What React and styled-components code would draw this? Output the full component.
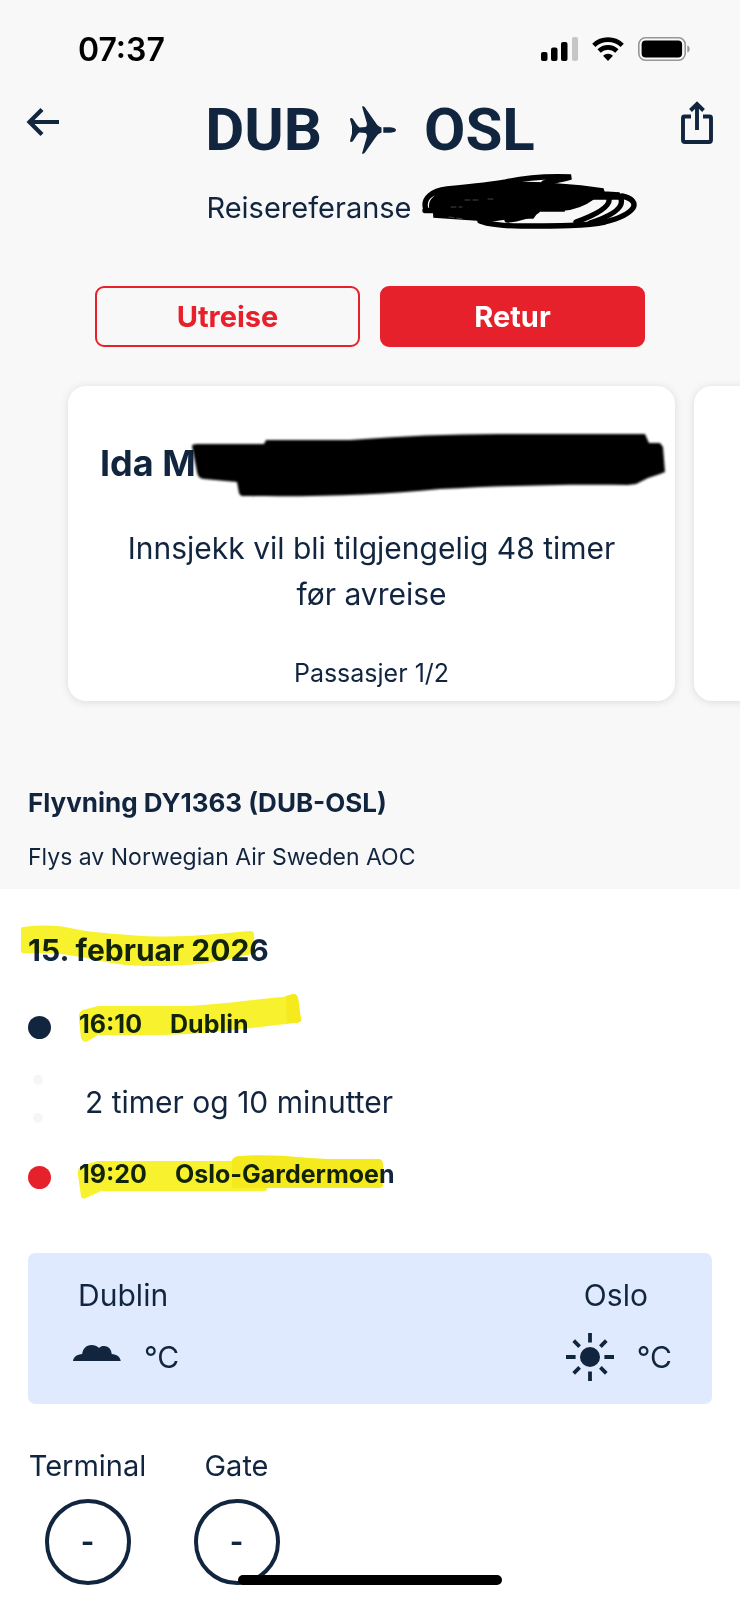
import React from "react";
import styled, { createGlobalStyle } from "styled-components";

const navy = "#12253f";
const red = "#e6212c";

const GlobalStyle = createGlobalStyle`
  *, *::before, *::after { box-sizing: border-box; }
  body {
    margin: 0;
    background: #fff;
    color: ${navy};
    font-family: Inter, "Liberation Sans", sans-serif;
  }
  h1, h2, h3, p, ol, dl, dd { margin: 0; padding: 0; }
`;

const Page = styled.div`
  position: relative;
  min-height: 100vh;
  overflow: hidden;
`;

const Upper = styled.section`
  background: #f8f8f8;
  padding-bottom: 16px;
`;

const StatusBar = styled.div`
  display: flex;
  align-items: center;
  justify-content: space-between;
  height: 98px;
  padding: 0 50px 0 78px;
  color: #000;
`;

const Clock = styled.time`
  font-size: 32px;
  font-weight: 600;
`;

const StatusIcons = styled.div`
  display: flex;
  align-items: center;
  gap: 14px;
  svg { display: block; }
`;

const Header = styled.header`
  display: flex;
  align-items: flex-start;
  justify-content: space-between;
  height: 76px;
  padding: 0 26px;
`;

const IconButton = styled.button`
  display: block;
  margin-top: ${(p) => p.$top};
  padding: 0;
  border: 0;
  background: none;
  color: ${navy};
  svg { display: block; }
`;

const Route = styled.h1`
  display: flex;
  align-items: center;
  gap: 28px;
  font: 700 60px/64px Roboto, Inter, sans-serif;
  svg { display: block; }
`;

const Reference = styled.p`
  display: flex;
  align-items: flex-start;
  justify-content: center;
  gap: 10px;
  height: 112px;
  padding-left: 104px;
  font-size: 29px;
  line-height: 68px;
  svg { display: block; flex: none; }
`;

const Tabs = styled.nav`
  display: grid;
  grid-template-columns: 1fr 1fr;
  gap: 20px;
  padding: 0 95px;
`;

const Tab = styled.button`
  height: 61px;
  border: 2px solid ${red};
  border-radius: 9px;
  background: ${(p) => (p.$active ? red : "transparent")};
  color: ${(p) => (p.$active ? "#fff" : red)};
  font: 700 29px/32px Inter, sans-serif;
`;

const Carousel = styled.div`
  display: flex;
  gap: 19px;
  padding: 39px 0 86px 68px;
  overflow: hidden;
`;

const Card = styled.article`
  position: relative;
  flex: 0 0 calc(100% - 65px);
  height: 315px;
  padding: 54px 32px 0;
  border-radius: 18px;
  background: #fff;
  box-shadow: 0 1px 8px rgba(0, 0, 0, 0.12);
  text-align: center;
`;

const Passenger = styled.h2`
  font-size: 36px;
  font-weight: 700;
  line-height: 46px;
  text-align: left;
`;

const Redaction = styled.svg`
  position: absolute;
  top: 46px;
  right: 8px;
  width: 476px;
  height: 66px;
  overflow: visible;
  filter: blur(1px);
`;

const CheckIn = styled.p`
  margin-top: 39px;
  padding: 0 24px;
  font-size: 30px;
  line-height: 46px;
`;

const Counter = styled.p`
  margin-top: 40px;
  font-size: 25px;
  line-height: 32px;
`;

const FlightName = styled.h2`
  padding: 0 28px;
  font-size: 26px;
  font-weight: 700;
  line-height: 32px;
`;

const Operator = styled.p`
  padding: 0 28px;
  margin-top: 22px;
  font-size: 23px;
  line-height: 32px;
`;

const Details = styled.section`
  padding: 41px 28px 15px;
`;

const Marked = styled.span`
  position: relative;
  display: inline-block;
`;

const Marker = styled.svg`
  position: absolute;
  left: ${(p) => p.$left};
  top: ${(p) => p.$top};
  overflow: visible;
  mix-blend-mode: multiply;
  pointer-events: none;
`;

const TravelDate = styled.h3`
  font-size: 30px;
  font-weight: 700;
  line-height: 40px;
`;

const Stops = styled.ol`
  margin-top: 37px;
  list-style: none;
`;

const Stop = styled.li`
  display: flex;
  align-items: center;
  gap: 28px;
  height: 40px;
  font-size: 25px;
  font-weight: 700;
`;

const Dot = styled.span`
  width: 23px;
  height: 23px;
  border-radius: 50%;
  background: ${(p) => p.$color};
`;

const StopText = styled(Marked)`
  display: flex;
  gap: 28px;
  padding-bottom: 6px;
`;

const Leg = styled.li`
  display: flex;
  align-items: center;
  gap: 42px;
  height: 110px;
  padding-left: 5px;
  font-size: 30px;
`;

const LegDots = styled.span`
  display: grid;
  gap: 28px;
  padding-bottom: 6px;
  span {
    width: 10px;
    height: 10px;
    border-radius: 50%;
    background: #f6f6f6;
  }
`;

const Weather = styled.section`
  display: flex;
  justify-content: space-between;
  height: 151px;
  margin-top: 56px;
  padding: 22px 40px 0 45px;
  border-radius: 7px;
  background: #dfeafe;
  font-size: 30px;
`;

const City = styled.div`
  display: flex;
  flex-direction: column;
  align-items: center;
  gap: 17px;
  line-height: 40px;
`;

const CityName = styled.span`
  padding-right: 6px;
`;

const Reading = styled.div`
  display: flex;
  align-items: center;
  gap: 23px;
  height: 50px;
  svg { display: block; }
`;

const Gates = styled.dl`
  display: flex;
  gap: 30px;
  margin-top: 42px;
`;

const GateItem = styled.div`
  display: flex;
  flex-direction: column;
  align-items: center;
  min-width: 119px;
  font-size: 29px;
  line-height: 40px;
`;

const Ring = styled.dd`
  display: grid;
  place-items: center;
  width: 86px;
  height: 86px;
  margin-top: 13px;
  border: 4px solid ${navy};
  border-radius: 50%;
  font-weight: 700;
`;

const HomeBar = styled.div`
  position: absolute;
  bottom: 15px;
  left: 50%;
  width: 264px;
  height: 10px;
  margin-left: -132px;
  border-radius: 5px;
  background: #000;
`;

const Signal = () => (
  <svg width="37" height="24" viewBox="0 0 37 24" aria-hidden="true">
    <rect x="0" y="15" width="6.500" height="9" rx="2" />
    <rect x="10" y="10.500" width="6.500" height="13.500" rx="2" />
    <rect x="20" y="5" width="6.500" height="19" rx="2" />
    <rect x="31" y="0" width="6" height="24" rx="2" fill="#c6c6c6" />
  </svg>
);

const Wifi = () => (
  <svg width="32" height="24" viewBox="0 0 32 24" fill="none" stroke="#000" strokeWidth="4.6" aria-hidden="true">
    <path d="M1.8 8.4a20.4 20.4 0 0 1 28.4 0" />
    <path d="M7.1 14a12.7 12.7 0 0 1 17.8 0" />
    <path d="M11 18.7a7.2 7.2 0 0 1 10 0L16 24z" fill="#000" stroke="none" />
  </svg>
);

const Battery = () => (
  <svg width="52" height="24" viewBox="0 0 52 24" aria-hidden="true">
    <rect x="0.8" y="0.8" width="46.4" height="22.4" rx="6.6" fill="none" stroke="#979797" strokeWidth="1.6" />
    <rect x="3.6" y="3.5" width="40.5" height="17" rx="4" />
    <path d="M49.3 8.6c3.2 1 3.2 6 0 7z" fill="#979797" />
  </svg>
);

const Plane = () => (
  <svg width="46" height="48" viewBox="0 0 46 48" fill="currentColor" role="img" aria-label="til">
    <path d="M12 .5Q13.500-.5 14.800 1.200L25.500 16.500Q28.200 20.800 31 21.300L31.500 21.500V26.500L31 26.700Q28 27.400 25.500 31.500L14.800 46.800Q13.500 48.500 12 47.500L16.800 31Q17.300 28.200 15.500 27L9.500 26.600Q8 27.400 6.800 29.200L3 35Q1.800 36.300.5 35.700Q-.2 35.300.2 34L2 27.500V20.500L.2 14Q-.2 12.700.5 12.300Q1.800 11.700 3 13L6.800 18.800Q8 20.600 9.500 21.400L15.500 21Q17.300 19.800 16.800 17Z" />
    <path d="M33.300 21.200H39C43 21.200 46 22.300 46 24S43 26.800 39 26.800H33.300Z" />
  </svg>
);

const Cloud = () => (
  <svg width="48" height="25" viewBox="0 0 48 25" fill="currentColor" aria-hidden="true">
    <path d="M0 16C.6 12 4.200 9.300 9.200 9C9.700 4 13 0 18.500 0C21.500 0 24.300 1 26 3C27.500 1.600 29 1 31 1C36 1 38.500 5 38.700 9C43.800 9.300 47.200 12 47.700 16Z" />
  </svg>
);

const Sun = () => (
  <svg width="48" height="48" viewBox="0 0 48 48" stroke="currentColor" strokeWidth="3.800" strokeLinejoin="round" aria-hidden="true">
    <circle cx="24" cy="24" r="10" fill="currentColor" stroke="none" />
    <path d="M24 0V9.600M24 38.400V48M0 24H9.600M38.400 24H48M7.700 7.700L13.600 13.600M34.400 34.400L40.300 40.300M7.700 40.300L13.600 34.400M34.400 13.600L40.300 7.700" />
  </svg>
);

const Scribble = () => (
  <svg width="216" height="56" viewBox="421 173 216 56" fill="none" stroke="#000" strokeWidth="5.400" strokeLinecap="round" aria-hidden="true">
    <path d="M424 209.500H436M424.500 207C422 197 431 190 446 188C468 186 490 184 505 181C522 177 542 175 570 176C562 178.500 552 180 543 182" />
    <path d="M431 207C429 199 436 195 446 192M621 195C631 197 635 202 632 207C627 214 616 218 604 221C586 225 556 225 520 225C504 225 486 223 479 220" />
    <path d="M608 197C610 205 597 213 575 221M620 198C623 207 610 215 589 222M590 197C582 203 573 206 562 207M506 219C519 218 528 215 536 210" />
    <path d="M432 198L434 197V193H442L460 187L477 185L505 181L543 182L580 185L602 188L603 191L618 192L622 198H592L563 206V210H537L532 217H510L490 220L433 216Z" fill="#000" strokeWidth="1.500" />
    <path d="M464 199H480M487 198H495M450 206H461M448 216L463 218" stroke="#55595c" strokeWidth=".8" strokeDasharray="5 3" />
  </svg>
);

const highlights = {
  date: {
    left: "-7px", top: "-5px", width: 236, height: 44,
    paths: ["M2 2C18 0 34 0 49 3C66 7 84 8 108 10C158 14 192 9 230 6Q233 6 233 10L234 28C220 32 203 35 181 39C142 42 107 42 85 37C61 32 42 28 22 28H4Q0 29 0 25V5Q0 2 2 2Z"],
  },
  dublin: {
    left: "-1px", top: "-15px", width: 224, height: 50,
    paths: [
      "M1 25Q0 18 5 16L20 12Q60 12 110 12C145 10 180 5 205 3L215 0Q219 0 220 4L223 26Q223 28 218 29C170 34 125 41 80 41L20 41L10 47Q5 49 3 44Z",
      "M208 2L215 0Q219 0 220 4L223 26Q223 28 218 29H209Z",
    ],
  },
  oslo: {
    left: "-2px", top: "-4px", width: 308, height: 46,
    paths: [
      "M1 20Q0 13 5 11L20 6H190V34Q190 36 186 36H24L9 43Q5 45 4 41Z",
      "M155 5Q157 1 163 1C200-2 230 4 260 4H302Q305 4 306 8V30Q306 33 302 33H158Q155 33 155 30Z",
    ],
  },
};

const Highlight = ({ mark }) => (
  <Marker $left={mark.left} $top={mark.top} width={mark.width} height={mark.height} fill="#f8f12e" aria-hidden="true">
    {mark.paths.map((d, i) => (
      <path key={d} d={d} fill={i ? "#f4ea1e" : undefined} />
    ))}
  </Marker>
);

export default function App() {
  return (
    <Page>
      <GlobalStyle />
      <Upper>
        <StatusBar>
          <Clock>07:37</Clock>
          <StatusIcons>
            <Signal />
            <Wifi />
            <Battery />
          </StatusIcons>
        </StatusBar>
        <Header>
          <IconButton $top="10px" aria-label="Tilbake">
            <svg width="34" height="28" viewBox="0 0 34 28" fill="none" stroke="currentColor" strokeWidth="4.200">
              <path d="M16 1.500L3.500 14L16 26.500M4 14H33" />
            </svg>
          </IconButton>
          <Route>
            <span>DUB</span>
            <Plane />
            <span>OSL</span>
          </Route>
          <IconButton $top="2px" aria-label="Del">
            <svg width="34" height="45" viewBox="0 0 34 45" fill="none" stroke="currentColor" strokeWidth="3.900">
              <path d="M11 16.500H4.500Q3 16.500 3 18V40Q3 42 5 42H29Q31 42 31 40V18Q31 16.500 29.500 16.500H23M17 30V4M10.500 10.500L17 4L23.500 10.500" />
            </svg>
          </IconButton>
        </Header>
        <Reference>
          <span>Reisereferanse</span>
          <Scribble />
        </Reference>
        <Tabs>
          <Tab>Utreise</Tab>
          <Tab $active>Retur</Tab>
        </Tabs>
        <Carousel>
          <Card>
            <Passenger>Ida M</Passenger>
            <Redaction viewBox="191 432 476 66" aria-hidden="true">
              <path d="M192 446Q192 444 197 444H264L266 440L350 440C400 436 450 434 500 434H645L649 443H660L663 447L665 472L660 474L648 478L636 484L628 485C560 484 500 486 440 489C380 495 320 497 242 496Q240 496 239 493L237 482L204 479Q198 479 197 472Z" />
            </Redaction>
            <CheckIn>Innsjekk vil bli tilgjengelig 48 timer før avreise</CheckIn>
            <Counter>Passasjer 1/2</Counter>
          </Card>
          <Card />
        </Carousel>
        <FlightName>Flyvning DY1363 (DUB-OSL)</FlightName>
        <Operator>Flys av Norwegian Air Sweden AOC</Operator>
      </Upper>
      <Details>
        <TravelDate>
          <Marked>
            15. februar 2026
            <Highlight mark={highlights.date} />
          </Marked>
        </TravelDate>
        <Stops>
          <Stop>
            <Dot $color={navy} />
            <StopText>
              <time>16:10</time>
              <span>Dublin</span>
              <Highlight mark={highlights.dublin} />
            </StopText>
          </Stop>
          <Leg>
            <LegDots>
              <span />
              <span />
            </LegDots>
            2 timer og 10 minutter
          </Leg>
          <Stop>
            <Dot $color={red} />
            <StopText>
              <time>19:20</time>
              <span>Oslo-Gardermoen</span>
              <Highlight mark={highlights.oslo} />
            </StopText>
          </Stop>
        </Stops>
        <Weather>
          <City>
            <CityName>Dublin</CityName>
            <Reading>
              <Cloud />
              <span>°C</span>
            </Reading>
          </City>
          <City>
            <CityName>Oslo</CityName>
            <Reading>
              <Sun />
              <span>°C</span>
            </Reading>
          </City>
        </Weather>
        <Gates>
          <GateItem>
            <dt>Terminal</dt>
            <Ring>-</Ring>
          </GateItem>
          <GateItem>
            <dt>Gate</dt>
            <Ring>-</Ring>
          </GateItem>
        </Gates>
      </Details>
      <HomeBar />
    </Page>
  );
}
